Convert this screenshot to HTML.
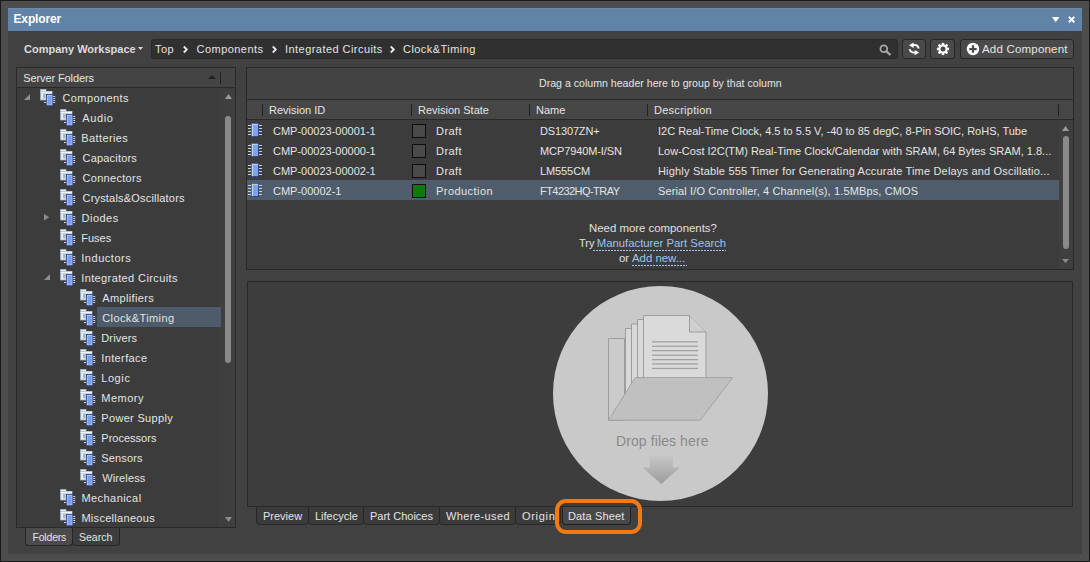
<!DOCTYPE html>
<html><head><meta charset="utf-8">
<style>
*{margin:0;padding:0;box-sizing:border-box}
html,body{width:1090px;height:562px;overflow:hidden}
body{position:relative;background:#1b1b1b;font-family:"Liberation Sans",sans-serif;font-size:11px;color:#e4e4e4}
.a{position:absolute}
.t{position:absolute;white-space:nowrap;line-height:20px;height:20px}
.tr{letter-spacing:0.15px}
.bc{letter-spacing:0.45px}
.tab{position:absolute;top:507px;height:18px;background:#3b3b3b;border:1px solid #282828;border-top:none;border-radius:0 0 4px 4px}
.dot{position:absolute;height:1px;background:repeating-linear-gradient(90deg,#9fc3ee 0 2px,transparent 2px 3px)}
svg{position:absolute;overflow:visible}
</style></head><body>
<div class="a" style="left:1px;top:1px;width:1088px;height:560px;background:#4d4d4d"></div>
<div class="a" style="left:8px;top:8px;width:1074px;height:546px;background:#414141"></div>
<div class="a" style="left:8px;top:8px;width:1074px;height:23px;background:#6183a8;border-top:1px solid #6b8cb0"></div>
<div class="a" style="left:8px;top:31px;width:1074px;height:1px;background:#3a4048"></div>
<div class="t" style="left:13.5px;top:9px;font-size:12px;font-weight:bold;color:#fff;letter-spacing:-0.15px">Explorer</div>
<svg style="left:1052px;top:17px" width="8" height="6"><path d="M0 0H7.4L3.7 5.3Z" fill="#fff"/></svg>
<svg style="left:1068px;top:16px" width="8" height="8"><path d="M0.9 0.9L6.3 6.3M6.3 0.9L0.9 6.3" stroke="#fff" stroke-width="2"/></svg>
<div class="t" style="left:24px;top:39px;font-weight:bold;color:#dcdcdc">Company Workspace</div>
<svg style="left:138px;top:47px" width="5" height="3"><path d="M0 0H5L2.5 3Z" fill="#ddd"/></svg>
<div class="a" style="left:151px;top:39px;width:747px;height:20px;background:#303030;border:1px solid #282828;border-radius:3px"></div>
<div class="t bc" style="left:155px;top:39px">Top</div>
<div class="t bc" style="left:196.6px;top:39px">Components</div>
<div class="t bc" style="left:285px;top:39px">Integrated Circuits</div>
<div class="t bc" style="left:403px;top:39px">Clock&amp;Timing</div>
<svg style="left:183px;top:46px" width="5" height="7"><path d="M0.8 0.5L3.8 3.5L0.8 6.5" fill="none" stroke="#eee" stroke-width="1.8"/></svg>
<svg style="left:272px;top:46px" width="5" height="7"><path d="M0.8 0.5L3.8 3.5L0.8 6.5" fill="none" stroke="#eee" stroke-width="1.8"/></svg>
<svg style="left:390px;top:46px" width="5" height="7"><path d="M0.8 0.5L3.8 3.5L0.8 6.5" fill="none" stroke="#eee" stroke-width="1.8"/></svg>
<svg style="left:879px;top:44px" width="13" height="13"><circle cx="4.8" cy="4.8" r="3.4" fill="none" stroke="#a9a9a9" stroke-width="1.8"/><path d="M7.3 7.3L11.5 11" stroke="#a9a9a9" stroke-width="2.2"/></svg>
<div class="a" style="left:902px;top:39px;width:24px;height:20px;background:#4a4a4a;border:1px solid #262626;border-radius:3px"></div>
<svg style="left:909px;top:42px" width="11" height="14"><path d="M4 3.2C6.5 2.6 9 3.6 9.8 6.6" fill="none" stroke="#fff" stroke-width="1.9"/><path d="M0 3.3L4.6 0.6V6Z" fill="#fff"/><path d="M0.6 7.2C1.4 9.8 3.6 10.8 6 10.6" fill="none" stroke="#fff" stroke-width="1.9"/><path d="M10.2 10.6L5.6 8V13.2Z" fill="#fff"/></svg>
<div class="a" style="left:930px;top:39px;width:25px;height:20px;background:#4a4a4a;border:1px solid #262626;border-radius:3px"></div>
<svg style="left:936px;top:42px" width="14" height="14"><g transform="translate(7,7)" fill="#fff"><circle r="4.5"/><rect x="-1.3" y="-6.1" width="2.6" height="12.2"/><rect x="-1.3" y="-6.1" width="2.6" height="12.2" transform="rotate(45)"/><rect x="-1.3" y="-6.1" width="2.6" height="12.2" transform="rotate(90)"/><rect x="-1.3" y="-6.1" width="2.6" height="12.2" transform="rotate(135)"/><circle r="2.5" fill="#4a4a4a"/></g></svg>
<div class="a" style="left:960px;top:39px;width:114px;height:20px;background:#4a4a4a;border:1px solid #262626;border-radius:3px"></div>
<svg style="left:966px;top:42px" width="14" height="14"><circle cx="7" cy="7" r="6.2" fill="#fff"/><rect x="3.3" y="6" width="7.4" height="2.2" fill="#4a4a4a"/><rect x="5.9" y="3.3" width="2.2" height="7.4" fill="#4a4a4a"/></svg>
<div class="t" style="left:982px;top:39px;font-size:11.5px;letter-spacing:0.2px">Add Component</div>
<div class="a" style="left:16px;top:67px;width:220px;height:461px;background:#3c3c3c;border:1px solid #292929"></div>
<div class="a" style="left:17px;top:68px;width:218px;height:20px;background:#444444;border-bottom:1px solid #292929"></div>
<div class="t" style="left:23.2px;top:68px;letter-spacing:-0.1px">Server Folders</div>
<svg style="left:208px;top:75px" width="8" height="4"><path d="M0 4H8L4 0Z" fill="#222"/></svg>
<div class="a" style="left:220px;top:72px;width:1px;height:12px;background:#222"></div>
<div class="a" style="left:17px;top:89px;width:218px;height:438px;overflow:hidden"><div class="a" style="left:-17px;top:-89px;width:1090px;height:562px">
<div class="a" style="left:219px;top:88px;width:16px;height:439px;background:#3f3f3f"></div>
<svg style="left:24px;top:94px" width="6" height="6"><path d="M6 0V6H0Z" fill="#8c8c8c"/></svg>
<svg style="left:40px;top:89px" width="16" height="17"><g>
<rect x="0" y="0" width="6.5" height="2.5" fill="#7d8c9c"/>
<rect x="0.6" y="0.6" width="5.4" height="1.6" fill="#e4eef8"/>
<rect x="0" y="2" width="12.6" height="9.6" fill="#7d8c9c"/>
<rect x="0.6" y="2.6" width="11.4" height="8.4" fill="#c6d5e4"/>
<rect x="0.6" y="2.6" width="11.4" height="1.3" fill="#f0f6fc"/>
<rect x="1.4" y="4.6" width="1.6" height="5.6" fill="#e8f0f8"/>
<rect x="3" y="5.6" width="2.6" height="0.9" fill="#8594a4"/>
<rect x="3" y="7.6" width="2.6" height="0.9" fill="#8594a4"/>
<rect x="6" y="5" width="7.2" height="12" fill="#2f4284"/>
<rect x="6.8" y="5.8" width="5.6" height="10.4" fill="#a9c1f7"/>
<rect x="7.8" y="6.8" width="3.8" height="8.6" fill="#7b9ff0"/>
<g fill="#cdd6e6"><rect x="13.2" y="7" width="2" height="1"/><rect x="13.2" y="9" width="2" height="1"/><rect x="13.2" y="11" width="2" height="1"/><rect x="13.2" y="13" width="2" height="1"/><rect x="4" y="13" width="2" height="1"/></g>
</g></svg>
<div class="t" style="left:62.5px;top:88px;letter-spacing:0.4px">Components</div>
<svg style="left:60px;top:109px" width="16" height="17"><g>
<rect x="0" y="0" width="6.5" height="2.5" fill="#7d8c9c"/>
<rect x="0.6" y="0.6" width="5.4" height="1.6" fill="#e4eef8"/>
<rect x="0" y="2" width="12.6" height="9.6" fill="#7d8c9c"/>
<rect x="0.6" y="2.6" width="11.4" height="8.4" fill="#c6d5e4"/>
<rect x="0.6" y="2.6" width="11.4" height="1.3" fill="#f0f6fc"/>
<rect x="1.4" y="4.6" width="1.6" height="5.6" fill="#e8f0f8"/>
<rect x="3" y="5.6" width="2.6" height="0.9" fill="#8594a4"/>
<rect x="3" y="7.6" width="2.6" height="0.9" fill="#8594a4"/>
<rect x="6" y="5" width="7.2" height="12" fill="#2f4284"/>
<rect x="6.8" y="5.8" width="5.6" height="10.4" fill="#a9c1f7"/>
<rect x="7.8" y="6.8" width="3.8" height="8.6" fill="#7b9ff0"/>
<g fill="#cdd6e6"><rect x="13.2" y="7" width="2" height="1"/><rect x="13.2" y="9" width="2" height="1"/><rect x="13.2" y="11" width="2" height="1"/><rect x="13.2" y="13" width="2" height="1"/><rect x="4" y="13" width="2" height="1"/></g>
</g></svg>
<div class="t" style="left:82.3px;top:108px;letter-spacing:0.6px">Audio</div>
<svg style="left:60px;top:129px" width="16" height="17"><g>
<rect x="0" y="0" width="6.5" height="2.5" fill="#7d8c9c"/>
<rect x="0.6" y="0.6" width="5.4" height="1.6" fill="#e4eef8"/>
<rect x="0" y="2" width="12.6" height="9.6" fill="#7d8c9c"/>
<rect x="0.6" y="2.6" width="11.4" height="8.4" fill="#c6d5e4"/>
<rect x="0.6" y="2.6" width="11.4" height="1.3" fill="#f0f6fc"/>
<rect x="1.4" y="4.6" width="1.6" height="5.6" fill="#e8f0f8"/>
<rect x="3" y="5.6" width="2.6" height="0.9" fill="#8594a4"/>
<rect x="3" y="7.6" width="2.6" height="0.9" fill="#8594a4"/>
<rect x="6" y="5" width="7.2" height="12" fill="#2f4284"/>
<rect x="6.8" y="5.8" width="5.6" height="10.4" fill="#a9c1f7"/>
<rect x="7.8" y="6.8" width="3.8" height="8.6" fill="#7b9ff0"/>
<g fill="#cdd6e6"><rect x="13.2" y="7" width="2" height="1"/><rect x="13.2" y="9" width="2" height="1"/><rect x="13.2" y="11" width="2" height="1"/><rect x="13.2" y="13" width="2" height="1"/><rect x="4" y="13" width="2" height="1"/></g>
</g></svg>
<div class="t" style="left:81.3px;top:128px;letter-spacing:0.38px">Batteries</div>
<svg style="left:60px;top:149px" width="16" height="17"><g>
<rect x="0" y="0" width="6.5" height="2.5" fill="#7d8c9c"/>
<rect x="0.6" y="0.6" width="5.4" height="1.6" fill="#e4eef8"/>
<rect x="0" y="2" width="12.6" height="9.6" fill="#7d8c9c"/>
<rect x="0.6" y="2.6" width="11.4" height="8.4" fill="#c6d5e4"/>
<rect x="0.6" y="2.6" width="11.4" height="1.3" fill="#f0f6fc"/>
<rect x="1.4" y="4.6" width="1.6" height="5.6" fill="#e8f0f8"/>
<rect x="3" y="5.6" width="2.6" height="0.9" fill="#8594a4"/>
<rect x="3" y="7.6" width="2.6" height="0.9" fill="#8594a4"/>
<rect x="6" y="5" width="7.2" height="12" fill="#2f4284"/>
<rect x="6.8" y="5.8" width="5.6" height="10.4" fill="#a9c1f7"/>
<rect x="7.8" y="6.8" width="3.8" height="8.6" fill="#7b9ff0"/>
<g fill="#cdd6e6"><rect x="13.2" y="7" width="2" height="1"/><rect x="13.2" y="9" width="2" height="1"/><rect x="13.2" y="11" width="2" height="1"/><rect x="13.2" y="13" width="2" height="1"/><rect x="4" y="13" width="2" height="1"/></g>
</g></svg>
<div class="t" style="left:82.5px;top:148px;letter-spacing:0.19px">Capacitors</div>
<svg style="left:60px;top:169px" width="16" height="17"><g>
<rect x="0" y="0" width="6.5" height="2.5" fill="#7d8c9c"/>
<rect x="0.6" y="0.6" width="5.4" height="1.6" fill="#e4eef8"/>
<rect x="0" y="2" width="12.6" height="9.6" fill="#7d8c9c"/>
<rect x="0.6" y="2.6" width="11.4" height="8.4" fill="#c6d5e4"/>
<rect x="0.6" y="2.6" width="11.4" height="1.3" fill="#f0f6fc"/>
<rect x="1.4" y="4.6" width="1.6" height="5.6" fill="#e8f0f8"/>
<rect x="3" y="5.6" width="2.6" height="0.9" fill="#8594a4"/>
<rect x="3" y="7.6" width="2.6" height="0.9" fill="#8594a4"/>
<rect x="6" y="5" width="7.2" height="12" fill="#2f4284"/>
<rect x="6.8" y="5.8" width="5.6" height="10.4" fill="#a9c1f7"/>
<rect x="7.8" y="6.8" width="3.8" height="8.6" fill="#7b9ff0"/>
<g fill="#cdd6e6"><rect x="13.2" y="7" width="2" height="1"/><rect x="13.2" y="9" width="2" height="1"/><rect x="13.2" y="11" width="2" height="1"/><rect x="13.2" y="13" width="2" height="1"/><rect x="4" y="13" width="2" height="1"/></g>
</g></svg>
<div class="t" style="left:82.5px;top:168px;letter-spacing:0.3px">Connectors</div>
<svg style="left:60px;top:189px" width="16" height="17"><g>
<rect x="0" y="0" width="6.5" height="2.5" fill="#7d8c9c"/>
<rect x="0.6" y="0.6" width="5.4" height="1.6" fill="#e4eef8"/>
<rect x="0" y="2" width="12.6" height="9.6" fill="#7d8c9c"/>
<rect x="0.6" y="2.6" width="11.4" height="8.4" fill="#c6d5e4"/>
<rect x="0.6" y="2.6" width="11.4" height="1.3" fill="#f0f6fc"/>
<rect x="1.4" y="4.6" width="1.6" height="5.6" fill="#e8f0f8"/>
<rect x="3" y="5.6" width="2.6" height="0.9" fill="#8594a4"/>
<rect x="3" y="7.6" width="2.6" height="0.9" fill="#8594a4"/>
<rect x="6" y="5" width="7.2" height="12" fill="#2f4284"/>
<rect x="6.8" y="5.8" width="5.6" height="10.4" fill="#a9c1f7"/>
<rect x="7.8" y="6.8" width="3.8" height="8.6" fill="#7b9ff0"/>
<g fill="#cdd6e6"><rect x="13.2" y="7" width="2" height="1"/><rect x="13.2" y="9" width="2" height="1"/><rect x="13.2" y="11" width="2" height="1"/><rect x="13.2" y="13" width="2" height="1"/><rect x="4" y="13" width="2" height="1"/></g>
</g></svg>
<div class="t" style="left:82.5px;top:188px;letter-spacing:0.19px">Crystals&amp;Oscillators</div>
<svg style="left:44.2px;top:213.5px" width="6" height="7"><path d="M0 0L5.2 3.3L0 6.6Z" fill="#8c8c8c"/></svg>
<svg style="left:60px;top:209px" width="16" height="17"><g>
<rect x="0" y="0" width="6.5" height="2.5" fill="#7d8c9c"/>
<rect x="0.6" y="0.6" width="5.4" height="1.6" fill="#e4eef8"/>
<rect x="0" y="2" width="12.6" height="9.6" fill="#7d8c9c"/>
<rect x="0.6" y="2.6" width="11.4" height="8.4" fill="#c6d5e4"/>
<rect x="0.6" y="2.6" width="11.4" height="1.3" fill="#f0f6fc"/>
<rect x="1.4" y="4.6" width="1.6" height="5.6" fill="#e8f0f8"/>
<rect x="3" y="5.6" width="2.6" height="0.9" fill="#8594a4"/>
<rect x="3" y="7.6" width="2.6" height="0.9" fill="#8594a4"/>
<rect x="6" y="5" width="7.2" height="12" fill="#2f4284"/>
<rect x="6.8" y="5.8" width="5.6" height="10.4" fill="#a9c1f7"/>
<rect x="7.8" y="6.8" width="3.8" height="8.6" fill="#7b9ff0"/>
<g fill="#cdd6e6"><rect x="13.2" y="7" width="2" height="1"/><rect x="13.2" y="9" width="2" height="1"/><rect x="13.2" y="11" width="2" height="1"/><rect x="13.2" y="13" width="2" height="1"/><rect x="4" y="13" width="2" height="1"/></g>
</g></svg>
<div class="t" style="left:81.5px;top:208px;letter-spacing:0.5px">Diodes</div>
<svg style="left:60px;top:229px" width="16" height="17"><g>
<rect x="0" y="0" width="6.5" height="2.5" fill="#7d8c9c"/>
<rect x="0.6" y="0.6" width="5.4" height="1.6" fill="#e4eef8"/>
<rect x="0" y="2" width="12.6" height="9.6" fill="#7d8c9c"/>
<rect x="0.6" y="2.6" width="11.4" height="8.4" fill="#c6d5e4"/>
<rect x="0.6" y="2.6" width="11.4" height="1.3" fill="#f0f6fc"/>
<rect x="1.4" y="4.6" width="1.6" height="5.6" fill="#e8f0f8"/>
<rect x="3" y="5.6" width="2.6" height="0.9" fill="#8594a4"/>
<rect x="3" y="7.6" width="2.6" height="0.9" fill="#8594a4"/>
<rect x="6" y="5" width="7.2" height="12" fill="#2f4284"/>
<rect x="6.8" y="5.8" width="5.6" height="10.4" fill="#a9c1f7"/>
<rect x="7.8" y="6.8" width="3.8" height="8.6" fill="#7b9ff0"/>
<g fill="#cdd6e6"><rect x="13.2" y="7" width="2" height="1"/><rect x="13.2" y="9" width="2" height="1"/><rect x="13.2" y="11" width="2" height="1"/><rect x="13.2" y="13" width="2" height="1"/><rect x="4" y="13" width="2" height="1"/></g>
</g></svg>
<div class="t" style="left:81.2px;top:228px;letter-spacing:0.02px">Fuses</div>
<svg style="left:60px;top:249px" width="16" height="17"><g>
<rect x="0" y="0" width="6.5" height="2.5" fill="#7d8c9c"/>
<rect x="0.6" y="0.6" width="5.4" height="1.6" fill="#e4eef8"/>
<rect x="0" y="2" width="12.6" height="9.6" fill="#7d8c9c"/>
<rect x="0.6" y="2.6" width="11.4" height="8.4" fill="#c6d5e4"/>
<rect x="0.6" y="2.6" width="11.4" height="1.3" fill="#f0f6fc"/>
<rect x="1.4" y="4.6" width="1.6" height="5.6" fill="#e8f0f8"/>
<rect x="3" y="5.6" width="2.6" height="0.9" fill="#8594a4"/>
<rect x="3" y="7.6" width="2.6" height="0.9" fill="#8594a4"/>
<rect x="6" y="5" width="7.2" height="12" fill="#2f4284"/>
<rect x="6.8" y="5.8" width="5.6" height="10.4" fill="#a9c1f7"/>
<rect x="7.8" y="6.8" width="3.8" height="8.6" fill="#7b9ff0"/>
<g fill="#cdd6e6"><rect x="13.2" y="7" width="2" height="1"/><rect x="13.2" y="9" width="2" height="1"/><rect x="13.2" y="11" width="2" height="1"/><rect x="13.2" y="13" width="2" height="1"/><rect x="4" y="13" width="2" height="1"/></g>
</g></svg>
<div class="t" style="left:81.2px;top:248px;letter-spacing:0.55px">Inductors</div>
<svg style="left:44px;top:274px" width="6" height="6"><path d="M6 0V6H0Z" fill="#8c8c8c"/></svg>
<svg style="left:60px;top:269px" width="16" height="17"><g>
<rect x="0" y="0" width="6.5" height="2.5" fill="#7d8c9c"/>
<rect x="0.6" y="0.6" width="5.4" height="1.6" fill="#e4eef8"/>
<rect x="0" y="2" width="12.6" height="9.6" fill="#7d8c9c"/>
<rect x="0.6" y="2.6" width="11.4" height="8.4" fill="#c6d5e4"/>
<rect x="0.6" y="2.6" width="11.4" height="1.3" fill="#f0f6fc"/>
<rect x="1.4" y="4.6" width="1.6" height="5.6" fill="#e8f0f8"/>
<rect x="3" y="5.6" width="2.6" height="0.9" fill="#8594a4"/>
<rect x="3" y="7.6" width="2.6" height="0.9" fill="#8594a4"/>
<rect x="6" y="5" width="7.2" height="12" fill="#2f4284"/>
<rect x="6.8" y="5.8" width="5.6" height="10.4" fill="#a9c1f7"/>
<rect x="7.8" y="6.8" width="3.8" height="8.6" fill="#7b9ff0"/>
<g fill="#cdd6e6"><rect x="13.2" y="7" width="2" height="1"/><rect x="13.2" y="9" width="2" height="1"/><rect x="13.2" y="11" width="2" height="1"/><rect x="13.2" y="13" width="2" height="1"/><rect x="4" y="13" width="2" height="1"/></g>
</g></svg>
<div class="t" style="left:81.2px;top:268px;letter-spacing:0.39px">Integrated Circuits</div>
<svg style="left:80px;top:289px" width="16" height="17"><g>
<rect x="0" y="0" width="6.5" height="2.5" fill="#7d8c9c"/>
<rect x="0.6" y="0.6" width="5.4" height="1.6" fill="#e4eef8"/>
<rect x="0" y="2" width="12.6" height="9.6" fill="#7d8c9c"/>
<rect x="0.6" y="2.6" width="11.4" height="8.4" fill="#c6d5e4"/>
<rect x="0.6" y="2.6" width="11.4" height="1.3" fill="#f0f6fc"/>
<rect x="1.4" y="4.6" width="1.6" height="5.6" fill="#e8f0f8"/>
<rect x="3" y="5.6" width="2.6" height="0.9" fill="#8594a4"/>
<rect x="3" y="7.6" width="2.6" height="0.9" fill="#8594a4"/>
<rect x="6" y="5" width="7.2" height="12" fill="#2f4284"/>
<rect x="6.8" y="5.8" width="5.6" height="10.4" fill="#a9c1f7"/>
<rect x="7.8" y="6.8" width="3.8" height="8.6" fill="#7b9ff0"/>
<g fill="#cdd6e6"><rect x="13.2" y="7" width="2" height="1"/><rect x="13.2" y="9" width="2" height="1"/><rect x="13.2" y="11" width="2" height="1"/><rect x="13.2" y="13" width="2" height="1"/><rect x="4" y="13" width="2" height="1"/></g>
</g></svg>
<div class="t" style="left:102.2px;top:288px;letter-spacing:0.37px">Amplifiers</div>
<div class="a" style="left:97px;top:307px;width:124px;height:20px;background:#4d5b6a"></div>
<svg style="left:80px;top:309px" width="16" height="17"><g>
<rect x="0" y="0" width="6.5" height="2.5" fill="#7d8c9c"/>
<rect x="0.6" y="0.6" width="5.4" height="1.6" fill="#e4eef8"/>
<rect x="0" y="2" width="12.6" height="9.6" fill="#7d8c9c"/>
<rect x="0.6" y="2.6" width="11.4" height="8.4" fill="#c6d5e4"/>
<rect x="0.6" y="2.6" width="11.4" height="1.3" fill="#f0f6fc"/>
<rect x="1.4" y="4.6" width="1.6" height="5.6" fill="#e8f0f8"/>
<rect x="3" y="5.6" width="2.6" height="0.9" fill="#8594a4"/>
<rect x="3" y="7.6" width="2.6" height="0.9" fill="#8594a4"/>
<rect x="6" y="5" width="7.2" height="12" fill="#2f4284"/>
<rect x="6.8" y="5.8" width="5.6" height="10.4" fill="#a9c1f7"/>
<rect x="7.8" y="6.8" width="3.8" height="8.6" fill="#7b9ff0"/>
<g fill="#cdd6e6"><rect x="13.2" y="7" width="2" height="1"/><rect x="13.2" y="9" width="2" height="1"/><rect x="13.2" y="11" width="2" height="1"/><rect x="13.2" y="13" width="2" height="1"/><rect x="4" y="13" width="2" height="1"/></g>
</g></svg>
<div class="t" style="left:102.2px;top:308px;letter-spacing:0.4px">Clock&amp;Timing</div>
<svg style="left:80px;top:329px" width="16" height="17"><g>
<rect x="0" y="0" width="6.5" height="2.5" fill="#7d8c9c"/>
<rect x="0.6" y="0.6" width="5.4" height="1.6" fill="#e4eef8"/>
<rect x="0" y="2" width="12.6" height="9.6" fill="#7d8c9c"/>
<rect x="0.6" y="2.6" width="11.4" height="8.4" fill="#c6d5e4"/>
<rect x="0.6" y="2.6" width="11.4" height="1.3" fill="#f0f6fc"/>
<rect x="1.4" y="4.6" width="1.6" height="5.6" fill="#e8f0f8"/>
<rect x="3" y="5.6" width="2.6" height="0.9" fill="#8594a4"/>
<rect x="3" y="7.6" width="2.6" height="0.9" fill="#8594a4"/>
<rect x="6" y="5" width="7.2" height="12" fill="#2f4284"/>
<rect x="6.8" y="5.8" width="5.6" height="10.4" fill="#a9c1f7"/>
<rect x="7.8" y="6.8" width="3.8" height="8.6" fill="#7b9ff0"/>
<g fill="#cdd6e6"><rect x="13.2" y="7" width="2" height="1"/><rect x="13.2" y="9" width="2" height="1"/><rect x="13.2" y="11" width="2" height="1"/><rect x="13.2" y="13" width="2" height="1"/><rect x="4" y="13" width="2" height="1"/></g>
</g></svg>
<div class="t" style="left:101.2px;top:328px;letter-spacing:0.17px">Drivers</div>
<svg style="left:80px;top:349px" width="16" height="17"><g>
<rect x="0" y="0" width="6.5" height="2.5" fill="#7d8c9c"/>
<rect x="0.6" y="0.6" width="5.4" height="1.6" fill="#e4eef8"/>
<rect x="0" y="2" width="12.6" height="9.6" fill="#7d8c9c"/>
<rect x="0.6" y="2.6" width="11.4" height="8.4" fill="#c6d5e4"/>
<rect x="0.6" y="2.6" width="11.4" height="1.3" fill="#f0f6fc"/>
<rect x="1.4" y="4.6" width="1.6" height="5.6" fill="#e8f0f8"/>
<rect x="3" y="5.6" width="2.6" height="0.9" fill="#8594a4"/>
<rect x="3" y="7.6" width="2.6" height="0.9" fill="#8594a4"/>
<rect x="6" y="5" width="7.2" height="12" fill="#2f4284"/>
<rect x="6.8" y="5.8" width="5.6" height="10.4" fill="#a9c1f7"/>
<rect x="7.8" y="6.8" width="3.8" height="8.6" fill="#7b9ff0"/>
<g fill="#cdd6e6"><rect x="13.2" y="7" width="2" height="1"/><rect x="13.2" y="9" width="2" height="1"/><rect x="13.2" y="11" width="2" height="1"/><rect x="13.2" y="13" width="2" height="1"/><rect x="4" y="13" width="2" height="1"/></g>
</g></svg>
<div class="t" style="left:101.2px;top:348px;letter-spacing:0.39px">Interface</div>
<svg style="left:80px;top:369px" width="16" height="17"><g>
<rect x="0" y="0" width="6.5" height="2.5" fill="#7d8c9c"/>
<rect x="0.6" y="0.6" width="5.4" height="1.6" fill="#e4eef8"/>
<rect x="0" y="2" width="12.6" height="9.6" fill="#7d8c9c"/>
<rect x="0.6" y="2.6" width="11.4" height="8.4" fill="#c6d5e4"/>
<rect x="0.6" y="2.6" width="11.4" height="1.3" fill="#f0f6fc"/>
<rect x="1.4" y="4.6" width="1.6" height="5.6" fill="#e8f0f8"/>
<rect x="3" y="5.6" width="2.6" height="0.9" fill="#8594a4"/>
<rect x="3" y="7.6" width="2.6" height="0.9" fill="#8594a4"/>
<rect x="6" y="5" width="7.2" height="12" fill="#2f4284"/>
<rect x="6.8" y="5.8" width="5.6" height="10.4" fill="#a9c1f7"/>
<rect x="7.8" y="6.8" width="3.8" height="8.6" fill="#7b9ff0"/>
<g fill="#cdd6e6"><rect x="13.2" y="7" width="2" height="1"/><rect x="13.2" y="9" width="2" height="1"/><rect x="13.2" y="11" width="2" height="1"/><rect x="13.2" y="13" width="2" height="1"/><rect x="4" y="13" width="2" height="1"/></g>
</g></svg>
<div class="t" style="left:101.2px;top:368px;letter-spacing:0.6px">Logic</div>
<svg style="left:80px;top:389px" width="16" height="17"><g>
<rect x="0" y="0" width="6.5" height="2.5" fill="#7d8c9c"/>
<rect x="0.6" y="0.6" width="5.4" height="1.6" fill="#e4eef8"/>
<rect x="0" y="2" width="12.6" height="9.6" fill="#7d8c9c"/>
<rect x="0.6" y="2.6" width="11.4" height="8.4" fill="#c6d5e4"/>
<rect x="0.6" y="2.6" width="11.4" height="1.3" fill="#f0f6fc"/>
<rect x="1.4" y="4.6" width="1.6" height="5.6" fill="#e8f0f8"/>
<rect x="3" y="5.6" width="2.6" height="0.9" fill="#8594a4"/>
<rect x="3" y="7.6" width="2.6" height="0.9" fill="#8594a4"/>
<rect x="6" y="5" width="7.2" height="12" fill="#2f4284"/>
<rect x="6.8" y="5.8" width="5.6" height="10.4" fill="#a9c1f7"/>
<rect x="7.8" y="6.8" width="3.8" height="8.6" fill="#7b9ff0"/>
<g fill="#cdd6e6"><rect x="13.2" y="7" width="2" height="1"/><rect x="13.2" y="9" width="2" height="1"/><rect x="13.2" y="11" width="2" height="1"/><rect x="13.2" y="13" width="2" height="1"/><rect x="4" y="13" width="2" height="1"/></g>
</g></svg>
<div class="t" style="left:101.3px;top:388px;letter-spacing:0.5px">Memory</div>
<svg style="left:80px;top:409px" width="16" height="17"><g>
<rect x="0" y="0" width="6.5" height="2.5" fill="#7d8c9c"/>
<rect x="0.6" y="0.6" width="5.4" height="1.6" fill="#e4eef8"/>
<rect x="0" y="2" width="12.6" height="9.6" fill="#7d8c9c"/>
<rect x="0.6" y="2.6" width="11.4" height="8.4" fill="#c6d5e4"/>
<rect x="0.6" y="2.6" width="11.4" height="1.3" fill="#f0f6fc"/>
<rect x="1.4" y="4.6" width="1.6" height="5.6" fill="#e8f0f8"/>
<rect x="3" y="5.6" width="2.6" height="0.9" fill="#8594a4"/>
<rect x="3" y="7.6" width="2.6" height="0.9" fill="#8594a4"/>
<rect x="6" y="5" width="7.2" height="12" fill="#2f4284"/>
<rect x="6.8" y="5.8" width="5.6" height="10.4" fill="#a9c1f7"/>
<rect x="7.8" y="6.8" width="3.8" height="8.6" fill="#7b9ff0"/>
<g fill="#cdd6e6"><rect x="13.2" y="7" width="2" height="1"/><rect x="13.2" y="9" width="2" height="1"/><rect x="13.2" y="11" width="2" height="1"/><rect x="13.2" y="13" width="2" height="1"/><rect x="4" y="13" width="2" height="1"/></g>
</g></svg>
<div class="t" style="left:101.3px;top:408px;letter-spacing:0.32px">Power Supply</div>
<svg style="left:80px;top:429px" width="16" height="17"><g>
<rect x="0" y="0" width="6.5" height="2.5" fill="#7d8c9c"/>
<rect x="0.6" y="0.6" width="5.4" height="1.6" fill="#e4eef8"/>
<rect x="0" y="2" width="12.6" height="9.6" fill="#7d8c9c"/>
<rect x="0.6" y="2.6" width="11.4" height="8.4" fill="#c6d5e4"/>
<rect x="0.6" y="2.6" width="11.4" height="1.3" fill="#f0f6fc"/>
<rect x="1.4" y="4.6" width="1.6" height="5.6" fill="#e8f0f8"/>
<rect x="3" y="5.6" width="2.6" height="0.9" fill="#8594a4"/>
<rect x="3" y="7.6" width="2.6" height="0.9" fill="#8594a4"/>
<rect x="6" y="5" width="7.2" height="12" fill="#2f4284"/>
<rect x="6.8" y="5.8" width="5.6" height="10.4" fill="#a9c1f7"/>
<rect x="7.8" y="6.8" width="3.8" height="8.6" fill="#7b9ff0"/>
<g fill="#cdd6e6"><rect x="13.2" y="7" width="2" height="1"/><rect x="13.2" y="9" width="2" height="1"/><rect x="13.2" y="11" width="2" height="1"/><rect x="13.2" y="13" width="2" height="1"/><rect x="4" y="13" width="2" height="1"/></g>
</g></svg>
<div class="t" style="left:101.3px;top:428px;letter-spacing:0.01px">Processors</div>
<svg style="left:80px;top:449px" width="16" height="17"><g>
<rect x="0" y="0" width="6.5" height="2.5" fill="#7d8c9c"/>
<rect x="0.6" y="0.6" width="5.4" height="1.6" fill="#e4eef8"/>
<rect x="0" y="2" width="12.6" height="9.6" fill="#7d8c9c"/>
<rect x="0.6" y="2.6" width="11.4" height="8.4" fill="#c6d5e4"/>
<rect x="0.6" y="2.6" width="11.4" height="1.3" fill="#f0f6fc"/>
<rect x="1.4" y="4.6" width="1.6" height="5.6" fill="#e8f0f8"/>
<rect x="3" y="5.6" width="2.6" height="0.9" fill="#8594a4"/>
<rect x="3" y="7.6" width="2.6" height="0.9" fill="#8594a4"/>
<rect x="6" y="5" width="7.2" height="12" fill="#2f4284"/>
<rect x="6.8" y="5.8" width="5.6" height="10.4" fill="#a9c1f7"/>
<rect x="7.8" y="6.8" width="3.8" height="8.6" fill="#7b9ff0"/>
<g fill="#cdd6e6"><rect x="13.2" y="7" width="2" height="1"/><rect x="13.2" y="9" width="2" height="1"/><rect x="13.2" y="11" width="2" height="1"/><rect x="13.2" y="13" width="2" height="1"/><rect x="4" y="13" width="2" height="1"/></g>
</g></svg>
<div class="t" style="left:101.3px;top:448px;letter-spacing:0.13px">Sensors</div>
<svg style="left:80px;top:469px" width="16" height="17"><g>
<rect x="0" y="0" width="6.5" height="2.5" fill="#7d8c9c"/>
<rect x="0.6" y="0.6" width="5.4" height="1.6" fill="#e4eef8"/>
<rect x="0" y="2" width="12.6" height="9.6" fill="#7d8c9c"/>
<rect x="0.6" y="2.6" width="11.4" height="8.4" fill="#c6d5e4"/>
<rect x="0.6" y="2.6" width="11.4" height="1.3" fill="#f0f6fc"/>
<rect x="1.4" y="4.6" width="1.6" height="5.6" fill="#e8f0f8"/>
<rect x="3" y="5.6" width="2.6" height="0.9" fill="#8594a4"/>
<rect x="3" y="7.6" width="2.6" height="0.9" fill="#8594a4"/>
<rect x="6" y="5" width="7.2" height="12" fill="#2f4284"/>
<rect x="6.8" y="5.8" width="5.6" height="10.4" fill="#a9c1f7"/>
<rect x="7.8" y="6.8" width="3.8" height="8.6" fill="#7b9ff0"/>
<g fill="#cdd6e6"><rect x="13.2" y="7" width="2" height="1"/><rect x="13.2" y="9" width="2" height="1"/><rect x="13.2" y="11" width="2" height="1"/><rect x="13.2" y="13" width="2" height="1"/><rect x="4" y="13" width="2" height="1"/></g>
</g></svg>
<div class="t" style="left:102.2px;top:468px;letter-spacing:0.13px">Wireless</div>
<svg style="left:60px;top:489px" width="16" height="17"><g>
<rect x="0" y="0" width="6.5" height="2.5" fill="#7d8c9c"/>
<rect x="0.6" y="0.6" width="5.4" height="1.6" fill="#e4eef8"/>
<rect x="0" y="2" width="12.6" height="9.6" fill="#7d8c9c"/>
<rect x="0.6" y="2.6" width="11.4" height="8.4" fill="#c6d5e4"/>
<rect x="0.6" y="2.6" width="11.4" height="1.3" fill="#f0f6fc"/>
<rect x="1.4" y="4.6" width="1.6" height="5.6" fill="#e8f0f8"/>
<rect x="3" y="5.6" width="2.6" height="0.9" fill="#8594a4"/>
<rect x="3" y="7.6" width="2.6" height="0.9" fill="#8594a4"/>
<rect x="6" y="5" width="7.2" height="12" fill="#2f4284"/>
<rect x="6.8" y="5.8" width="5.6" height="10.4" fill="#a9c1f7"/>
<rect x="7.8" y="6.8" width="3.8" height="8.6" fill="#7b9ff0"/>
<g fill="#cdd6e6"><rect x="13.2" y="7" width="2" height="1"/><rect x="13.2" y="9" width="2" height="1"/><rect x="13.2" y="11" width="2" height="1"/><rect x="13.2" y="13" width="2" height="1"/><rect x="4" y="13" width="2" height="1"/></g>
</g></svg>
<div class="t" style="left:81.4px;top:488px;letter-spacing:0.45px">Mechanical</div>
<svg style="left:60px;top:509px" width="16" height="17"><g>
<rect x="0" y="0" width="6.5" height="2.5" fill="#7d8c9c"/>
<rect x="0.6" y="0.6" width="5.4" height="1.6" fill="#e4eef8"/>
<rect x="0" y="2" width="12.6" height="9.6" fill="#7d8c9c"/>
<rect x="0.6" y="2.6" width="11.4" height="8.4" fill="#c6d5e4"/>
<rect x="0.6" y="2.6" width="11.4" height="1.3" fill="#f0f6fc"/>
<rect x="1.4" y="4.6" width="1.6" height="5.6" fill="#e8f0f8"/>
<rect x="3" y="5.6" width="2.6" height="0.9" fill="#8594a4"/>
<rect x="3" y="7.6" width="2.6" height="0.9" fill="#8594a4"/>
<rect x="6" y="5" width="7.2" height="12" fill="#2f4284"/>
<rect x="6.8" y="5.8" width="5.6" height="10.4" fill="#a9c1f7"/>
<rect x="7.8" y="6.8" width="3.8" height="8.6" fill="#7b9ff0"/>
<g fill="#cdd6e6"><rect x="13.2" y="7" width="2" height="1"/><rect x="13.2" y="9" width="2" height="1"/><rect x="13.2" y="11" width="2" height="1"/><rect x="13.2" y="13" width="2" height="1"/><rect x="4" y="13" width="2" height="1"/></g>
</g></svg>
<div class="t" style="left:81.4px;top:508px;letter-spacing:0.3px">Miscellaneous</div>
</div></div>
<svg style="left:225px;top:93.5px" width="7" height="5"><path d="M0 5H7L3.5 0Z" fill="#9a9a9a"/></svg>
<div class="a" style="left:225px;top:116px;width:6px;height:247px;background:#8a8a8a;border-radius:3px"></div>
<svg style="left:225px;top:517px" width="7" height="5"><path d="M0 0H7L3.5 5Z" fill="#8a8a8a"/></svg>
<div class="a" style="left:25px;top:528px;width:48px;height:18px;background:#4b4b4b;border:1px solid #262626;border-top:none;border-radius:0 0 4px 4px"></div>
<div class="a" style="left:72px;top:528px;width:48px;height:18px;background:#3d3d3d;border:1px solid #262626;border-top:none;border-radius:0 0 4px 4px"></div>
<div class="t" style="left:32.5px;top:526.5px;font-size:10.5px;letter-spacing:-0.2px">Folders</div>
<div class="t" style="left:79px;top:526.5px;font-size:10.5px">Search</div>
<div class="a" style="left:246px;top:67px;width:828px;height:203px;background:#3c3c3c;border:1px solid #292929"></div>
<div class="a" style="left:247px;top:68px;width:826px;height:32px;background:#434343;border-bottom:1px solid #292929"></div>
<div class="a" style="left:247px;top:100px;width:826px;height:20px;background:#464646;border-bottom:1px solid #292929"></div>
<div class="t" style="left:539px;top:73px;font-size:10.6px">Drag a column header here to group by that column</div>
<div class="a" style="left:262px;top:104px;width:1px;height:12px;background:#222"></div>
<div class="a" style="left:411px;top:104px;width:1px;height:12px;background:#222"></div>
<div class="a" style="left:529px;top:104px;width:1px;height:12px;background:#222"></div>
<div class="a" style="left:647px;top:104px;width:1px;height:12px;background:#222"></div>
<div class="a" style="left:1058px;top:104px;width:1px;height:12px;background:#222"></div>
<div class="t" style="left:269px;top:100px">Revision ID</div>
<div class="t" style="left:418px;top:100px">Revision State</div>
<div class="t" style="left:536px;top:100px">Name</div>
<div class="t" style="left:654px;top:100px;letter-spacing:0.27px">Description</div>
<div class="a" style="left:1059px;top:120px;width:14px;height:149px;background:#3f3f3f"></div>
<svg style="left:248px;top:123px" width="14" height="14"><g>
<rect x="3" y="0" width="8" height="14" fill="#22336e"/>
<rect x="3.8" y="0.8" width="6.4" height="12.4" fill="#7fa1ee"/>
<rect x="3.8" y="0.8" width="1.2" height="12.4" fill="#c4d6fb"/>
<rect x="3.8" y="0.8" width="6.4" height="1" fill="#c4d6fb"/>
<g fill="#c8d2e4"><rect x="0" y="2" width="3" height="1"/><rect x="0" y="5" width="3" height="1"/><rect x="0" y="8" width="3" height="1"/><rect x="0" y="11" width="3" height="1"/><rect x="11" y="2" width="3" height="1"/><rect x="11" y="5" width="3" height="1"/><rect x="11" y="8" width="3" height="1"/><rect x="11" y="11" width="3" height="1"/></g>
</g></svg>
<div class="t" style="left:273px;top:121px">CMP-00023-00001-1</div>
<div class="a" style="left:412px;top:124px;width:14px;height:14px;background:#4a4a4a;border:1px solid #0e0e0e"></div>
<div class="t" style="left:436px;top:121px;letter-spacing:0.45px">Draft</div>
<div class="t" style="left:540px;top:121px;letter-spacing:-0.15px">DS1307ZN+</div>
<div class="t" style="left:658px;top:121px;letter-spacing:0px">I2C Real-Time Clock, 4.5 to 5.5 V, -40 to 85 degC, 8-Pin SOIC, RoHS, Tube</div>
<svg style="left:248px;top:143px" width="14" height="14"><g>
<rect x="3" y="0" width="8" height="14" fill="#22336e"/>
<rect x="3.8" y="0.8" width="6.4" height="12.4" fill="#7fa1ee"/>
<rect x="3.8" y="0.8" width="1.2" height="12.4" fill="#c4d6fb"/>
<rect x="3.8" y="0.8" width="6.4" height="1" fill="#c4d6fb"/>
<g fill="#c8d2e4"><rect x="0" y="2" width="3" height="1"/><rect x="0" y="5" width="3" height="1"/><rect x="0" y="8" width="3" height="1"/><rect x="0" y="11" width="3" height="1"/><rect x="11" y="2" width="3" height="1"/><rect x="11" y="5" width="3" height="1"/><rect x="11" y="8" width="3" height="1"/><rect x="11" y="11" width="3" height="1"/></g>
</g></svg>
<div class="t" style="left:273px;top:141px">CMP-00023-00000-1</div>
<div class="a" style="left:412px;top:144px;width:14px;height:14px;background:#4a4a4a;border:1px solid #0e0e0e"></div>
<div class="t" style="left:436px;top:141px;letter-spacing:0.45px">Draft</div>
<div class="t" style="left:540px;top:141px;letter-spacing:-0.1px">MCP7940M-I/SN</div>
<div class="t" style="left:658px;top:141px;letter-spacing:0px">Low-Cost I2C(TM) Real-Time Clock/Calendar with SRAM, 64 Bytes SRAM, 1.8...</div>
<svg style="left:248px;top:163px" width="14" height="14"><g>
<rect x="3" y="0" width="8" height="14" fill="#22336e"/>
<rect x="3.8" y="0.8" width="6.4" height="12.4" fill="#7fa1ee"/>
<rect x="3.8" y="0.8" width="1.2" height="12.4" fill="#c4d6fb"/>
<rect x="3.8" y="0.8" width="6.4" height="1" fill="#c4d6fb"/>
<g fill="#c8d2e4"><rect x="0" y="2" width="3" height="1"/><rect x="0" y="5" width="3" height="1"/><rect x="0" y="8" width="3" height="1"/><rect x="0" y="11" width="3" height="1"/><rect x="11" y="2" width="3" height="1"/><rect x="11" y="5" width="3" height="1"/><rect x="11" y="8" width="3" height="1"/><rect x="11" y="11" width="3" height="1"/></g>
</g></svg>
<div class="t" style="left:273px;top:161px">CMP-00023-00002-1</div>
<div class="a" style="left:412px;top:164px;width:14px;height:14px;background:#4a4a4a;border:1px solid #0e0e0e"></div>
<div class="t" style="left:436px;top:161px;letter-spacing:0.45px">Draft</div>
<div class="t" style="left:540px;top:161px;letter-spacing:-0.1px">LM555CM</div>
<div class="t" style="left:658px;top:161px;letter-spacing:0.18px">Highly Stable 555 Timer for Generating Accurate Time Delays and Oscillatio...</div>
<div class="a" style="left:247px;top:180px;width:812px;height:20px;background:#4e5c6b"></div>
<svg style="left:248px;top:183px" width="14" height="14"><g>
<rect x="3" y="0" width="8" height="14" fill="#22336e"/>
<rect x="3.8" y="0.8" width="6.4" height="12.4" fill="#7fa1ee"/>
<rect x="3.8" y="0.8" width="1.2" height="12.4" fill="#c4d6fb"/>
<rect x="3.8" y="0.8" width="6.4" height="1" fill="#c4d6fb"/>
<g fill="#c8d2e4"><rect x="0" y="2" width="3" height="1"/><rect x="0" y="5" width="3" height="1"/><rect x="0" y="8" width="3" height="1"/><rect x="0" y="11" width="3" height="1"/><rect x="11" y="2" width="3" height="1"/><rect x="11" y="5" width="3" height="1"/><rect x="11" y="8" width="3" height="1"/><rect x="11" y="11" width="3" height="1"/></g>
</g></svg>
<div class="t" style="left:273px;top:181px">CMP-00002-1</div>
<div class="a" style="left:412px;top:184px;width:14px;height:14px;background:#0c7a0c;border:1px solid #0e0e0e"></div>
<div class="t" style="left:436px;top:181px;letter-spacing:0.45px">Production</div>
<div class="t" style="left:540px;top:181px;letter-spacing:-0.55px">FT4232HQ-TRAY</div>
<div class="t" style="left:658px;top:181px;letter-spacing:0.13px">Serial I/O Controller, 4 Channel(s), 1.5MBps, CMOS</div>
<svg style="left:1062px;top:125.5px" width="7" height="5"><path d="M0 5H7L3.5 0Z" fill="#9a9a9a"/></svg>
<div class="a" style="left:1063px;top:136px;width:6px;height:113px;background:#8a8a8a;border-radius:3px"></div>
<svg style="left:1062px;top:259px" width="7" height="4"><path d="M0 0H7L3.5 4Z" fill="#8a8a8a"/></svg>
<div class="t" style="left:589px;top:218px;font-size:11.4px;color:#e0e0e0">Need more components?</div>
<div class="t" style="left:579px;top:233px;font-size:11px;color:#e0e0e0">Try</div>
<div class="t" style="left:596.8px;top:233px;font-size:11.3px;color:#9fc3ee">Manufacturer Part Search</div>
<div class="dot" style="left:593px;top:250px;width:133px"></div>
<div class="t" style="left:619px;top:248px;font-size:11.4px;color:#e0e0e0">or</div>
<div class="t" style="left:632px;top:248px;font-size:11.4px;color:#9fc3ee">Add new...</div>
<div class="dot" style="left:632px;top:265px;width:55px"></div>
<div class="a" style="left:247px;top:281px;width:826px;height:226px;background:#3d3d3d;border:1px solid #292929"></div>
<div class="a" style="left:553px;top:286px;width:215px;height:215px;border-radius:50%;background:#c9c9c9"></div>
<svg style="left:600px;top:305px" width="140" height="120"><g stroke="#9d9d9d" stroke-width="1">
<path d="M8.5 33.5H24.5V115.5H8.5Z" fill="#cbcbcb"/>
<path d="M25.5 23.5H32V90H25.5Z" fill="#d9d9d9"/>
<path d="M31.5 19H37.5V90H31.5Z" fill="#d9d9d9"/>
<path d="M37.5 14.5H43.5V90H37.5Z" fill="#d9d9d9"/>
<path d="M43.5 10.5H89.5L106 27V90H43.5Z" fill="#dadada"/>
<path d="M89.5 10.5V27H106" fill="#cfcfcf"/>
</g>
<g fill="#a2a2a2"><rect x="52" y="36.2" width="46" height="1.3"/><rect x="52" y="40.6" width="46" height="1.3"/><rect x="52" y="45" width="46" height="1.3"/><rect x="52" y="49.6" width="46" height="1.3"/><rect x="52" y="54" width="46" height="1.3"/><rect x="52" y="58.3" width="46" height="1.3"/><rect x="52" y="62.8" width="46" height="1.3"/></g>
<path d="M8.5 115.2L35.2 72.6H132.7L100.3 115.2Z" fill="#c0c0c0" stroke="#a3a3a3" stroke-width="1"/>
</svg>
<div class="t" style="left:616px;top:431px;font-size:14px;color:#8a8a8a;letter-spacing:0.1px">Drop files here</div>
<svg style="left:642px;top:456px" width="39" height="29"><defs><linearGradient id="ag" x1="0" y1="0" x2="0" y2="1"><stop offset="0" stop-color="#c6c6c6"/><stop offset="1" stop-color="#9c9c9c"/></linearGradient></defs><path d="M8 0H31V11.5H38L19.3 28L0.5 11.5H8Z" fill="url(#ag)"/></svg>
<div class="tab" style="left:256px;width:53px"></div>
<div class="t" style="left:263px;top:506px;letter-spacing:0px">Preview</div>
<div class="tab" style="left:308px;width:56px"></div>
<div class="t" style="left:315px;top:506px;letter-spacing:0px">Lifecycle</div>
<div class="tab" style="left:363px;width:77px"></div>
<div class="t" style="left:370px;top:506px;letter-spacing:0px">Part Choices</div>
<div class="tab" style="left:439px;width:77px"></div>
<div class="t" style="left:446px;top:506px;letter-spacing:0.4px">Where-used</div>
<div class="tab" style="left:515px;width:46px"></div>
<div class="t" style="left:522px;top:506px;letter-spacing:0.7px">Origin</div>
<div class="tab" style="left:562px;width:69px;background:#484848;border-color:#202020"></div>
<div class="t" style="left:568px;top:506px;letter-spacing:0.15px">Data Sheet</div>
<div class="a" style="left:555px;top:499px;width:87px;height:34.5px;border:4.3px solid #f27a14;border-radius:11px"></div>
</body></html>
